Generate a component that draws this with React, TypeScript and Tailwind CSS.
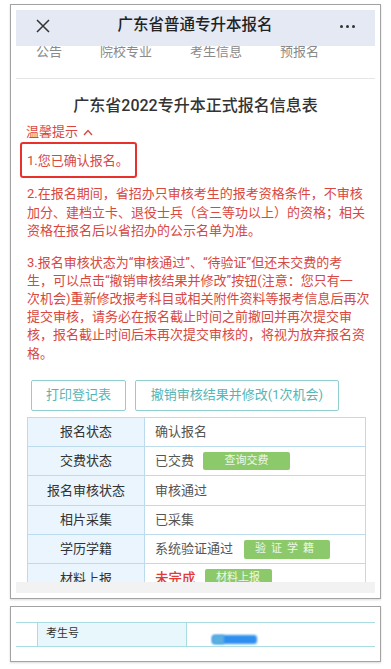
import React from 'react';

const FONT = { fontFamily: 'Roboto, "Noto Sans CJK SC", sans-serif' };

const tabs = ['公告', '院校专业', '考生信息', '预报名'];

const para2 = [
  '2.在报名期间，省招办只审核考生的报考资格条件，不审核',
  '加分、建档立卡、退役士兵（含三等功以上）的资格；相关',
  '资格在报名后以省招办的公示名单为准。',
];

const para3 = [
  '3.报名审核状态为“审核通过”、“待验证”但还未交费的考',
  '生，可以点击“撤销审核结果并修改”按钮(注意：您只有一',
  '次机会)重新修改报考科目或相关附件资料等报考信息后再次',
  '提交审核，请务必在报名截止时间之前撤回并再次提交审',
  '核，报名截止时间后未再次提交审核的，将视为放弃报名资',
  '格。',
];

const GreenBtn: React.FC<{ label: string; w: string }> = ({ label, w }) => (
  <span
    className={`ml-[9px] inline-flex h-[18px] items-center justify-center rounded-[2px] bg-[#8cc96b] text-[11px] text-[#eef8e8] ${w}`}
  >
    {label}
  </span>
);

const Row: React.FC<{ label: string; children: React.ReactNode }> = ({ label, children }) => (
  <div className="flex h-[29.3px] border-b border-[#bcdcee]">
    <div className="flex w-[117px] shrink-0 items-center justify-center border-r border-[#bcdcee] bg-[#eaf5fd] text-[13px] text-[#333]">
      {label}
    </div>
    <div className="flex flex-1 items-center pl-[10px] text-[13px] text-[#555]">{children}</div>
  </div>
);

export default function App() {
  return (
    <div className="h-[669px] w-[391px] overflow-hidden bg-white pt-[4px]" style={FONT}>
      {/* first screenshot frame */}
      <div className="mx-[10px] h-[595px] border border-[#a3a3a3] bg-white p-[5px] shadow-[0_1px_2px_rgba(0,0,0,0.15)]">
        <div className="h-[572px] overflow-hidden">
          {/* app bar */}
          <div className="relative z-10 flex h-[36px] items-center justify-between bg-[#e4e9f4] px-[20px] pb-[4px]">
            <svg width="14" height="14" viewBox="0 0 14 14">
              <path d="M1 1L13 13M13 1L1 13" stroke="#333" strokeWidth="1.5" fill="none" />
            </svg>
            <span className="text-[15.5px] font-medium text-[#222]">广东省普通专升本报名</span>
            <span className="flex gap-[3px]">
              <span className="h-[3px] w-[3px] rounded-full bg-[#333]" />
              <span className="h-[3px] w-[3px] rounded-full bg-[#333]" />
              <span className="h-[3px] w-[3px] rounded-full bg-[#333]" />
            </span>
          </div>

          {/* tabs, scrolled under the bar */}
          <div className="flex h-[33px] gap-[38px] border-b border-[#e6e6e6] pl-[20px]">
            {tabs.map((t) => (
              <span key={t} className="-mt-[1px] text-[13px] leading-[13px] text-[#8a8a8a]">
                {t}
              </span>
            ))}
          </div>

          <div className="mt-[16px] text-center text-[16px] leading-[22px] font-medium text-[#333]">
            广东省2022专升本正式报名信息表
          </div>

          <div className="mt-[6px] flex items-center pl-[10px] text-[13px] leading-[18px] text-[#d9473f]">
            温馨提示
            <svg className="ml-[5px]" width="10" height="7" viewBox="0 0 10 7">
              <path d="M1 6L5 1.5L9 6" stroke="#d9473f" strokeWidth="1.3" fill="none" />
            </svg>
          </div>

          <div className="ml-[4px] mt-[1px] flex h-[36px] w-[117px] items-center rounded-[3px] border-2 border-[#e8312b] pl-[5px] pt-[2px] text-[13px] text-[#d9473f]">
            1.您已确认报名。
          </div>

          <div className="mt-[7px] pl-[11px] text-[13px] leading-[18.5px] text-[#d9473f]">
            {para2.map((l) => (
              <div key={l} className="whitespace-nowrap">
                {l}
              </div>
            ))}
          </div>

          <div className="mt-[13px] pl-[11px] text-[13px] leading-[18.2px] text-[#d9473f]">
            {para3.map((l) => (
              <div key={l} className="whitespace-nowrap">
                {l}
              </div>
            ))}
          </div>

          <div className="mt-[17px] flex gap-[9px] pl-[15px]">
            <button className="h-[31px] w-[95px] rounded-[2px] border border-[#8fcfd0] text-[13px] text-[#55b5b6]">
              打印登记表
            </button>
            <button className="h-[31px] w-[204px] rounded-[2px] border border-[#8fcfd0] text-[13px] text-[#55b5b6]">
              撤销审核结果并修改(1次机会)
            </button>
          </div>

          <div className="ml-[11px] mt-[6px] w-[339px] border-x border-t border-[#bcdcee]">
            <Row label="报名状态">确认报名</Row>
            <Row label="交费状态">
              已交费
              <GreenBtn label="查询交费" w="w-[87px]" />
            </Row>
            <Row label="报名审核状态">审核通过</Row>
            <Row label="相片采集">已采集</Row>
            <Row label="学历学籍">
              系统验证通过
              <span className="ml-[11px] inline-flex h-[19px] w-[86px] items-center justify-center rounded-[2px] bg-[#8cc96b] text-[11px] tracking-[5px] text-[#eef8e8]">
                验证学籍
              </span>
            </Row>
            <Row label="材料上报">
              <span className="text-[13.5px] font-medium text-[#e03a36]">未完成</span>
              <GreenBtn label="材料上报" w="w-[67px]" />
            </Row>
          </div>
        </div>
        <div className="h-[11px] bg-[#f2f2f2]" />
      </div>

      {/* second screenshot frame */}
      <div className="mx-[10px] mt-[7px] h-[56px] border border-[#a3a3a3] bg-white px-[5px] pt-[15px] shadow-[0_1px_2px_rgba(0,0,0,0.15)]">
        <div className="flex h-[25px] border-y border-[#a9dde2]">
          <div className="w-[22px] border-r border-[#a9dde2]" />
          <div className="flex w-[149px] items-center border-r border-[#a9dde2] bg-[#e8f7fc] pl-[8px] text-[11px] text-[#333]">
            考生号
          </div>
          <div className="relative flex-1">
            <div className="absolute left-[25px] top-[12px] h-[9px] w-[45px] rounded-[3px] bg-[#2f8ff0] blur-[1px]" />
            <div className="absolute left-[25px] top-[12px] h-[9px] w-[12px] rounded-l-[3px] bg-[#5aaee0] blur-[1px]" />
          </div>
        </div>
      </div>
    </div>
  );
}
